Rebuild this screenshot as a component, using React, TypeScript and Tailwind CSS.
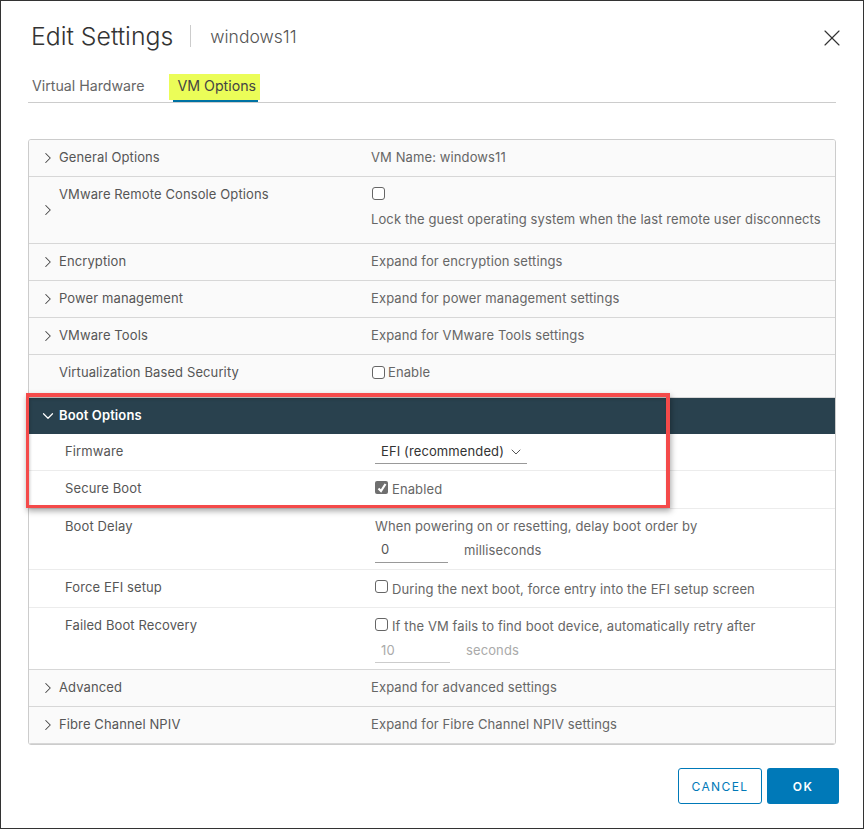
import { ChevronDown, ChevronRight, X } from 'lucide-react'
import type { ReactNode } from 'react'

function Box({ checked, className = '' }: { checked?: boolean; className?: string }) {
  if (checked) {
    return (
      <span className={`flex h-[13px] w-[13px] shrink-0 items-center justify-center rounded-[2px] bg-[#6f6f6f] ${className}`}>
        <svg viewBox="0 0 12 12" className="h-[12px] w-[12px]" fill="none" stroke="#fff" strokeWidth="2.2">
          <path d="M2.5 6.5 5 9l4.5-7" />
        </svg>
      </span>
    )
  }
  return <span className={`block h-[13px] w-[13px] shrink-0 rounded-[3px] border border-[#666] bg-white ${className}`} />
}

function Row({
  label,
  noChevron,
  height,
  children,
}: {
  label: string
  noChevron?: boolean
  height: string
  children: ReactNode
}) {
  return (
    <div className={`flex border-b border-[#d7d7d7] bg-[#fafafa] ${height}`}>
      <div className="flex w-[342px] shrink-0 pl-[10px]">
        <span className="flex w-[20px] shrink-0 items-center">
          {!noChevron && <ChevronRight size={18} strokeWidth={1.4} className="text-[#444]" />}
        </span>
        <span className="pt-[8px] text-[#565656]">{label}</span>
      </div>
      <div className="min-w-0 flex-1 pt-[8px]">{children}</div>
    </div>
  )
}

function SubRow({ label, height, children, last }: { label: string; height: string; children: ReactNode; last?: boolean }) {
  return (
    <div className={`flex border-b ${last ? 'border-[#d7d7d7]' : 'border-[#ececec]'} bg-white ${height}`}>
      <div className="w-[346px] shrink-0 pl-[36px] pt-[8px] text-[#565656]">{label}</div>
      <div className="min-w-0 flex-1">{children}</div>
    </div>
  )
}

export default function App() {
  return (
    <div className="relative flex h-[829px] w-[864px] flex-col border border-[#333] bg-white font-['Inter',sans-serif] text-[13px] tracking-[0.11px]">
      {/* Title */}
      <div className="flex h-[72px] items-start pl-[30px] pr-[17px] pt-[24px]">
        <h1 className="text-[24.8px] font-light leading-[22px] tracking-normal text-[#333]">Edit Settings</h1>
        <span className="ml-[17px] mr-[19px] h-[22px] w-px bg-[#ccc]" />
        <span className="text-[17.5px] font-light leading-[24px] tracking-normal text-[#555]">windows11</span>
        <X size={28} strokeWidth={1} className="ml-auto -mt-[1px] text-[#333]" />
      </div>

      {/* Tabs */}
      <div className="mx-[27px] flex h-[30px] w-[808px] border-b border-[#ccc] text-[14.2px] tracking-normal">
        <span className="ml-[4px] pt-[2px] text-[#666]">Virtual Hardware</span>
        <div className="relative ml-[29px] w-[85px] border-b-[3px] border-[#0072a3] pl-[4px] pt-[2px] text-[#444]">
          <span className="absolute -left-[4px] -right-[2px] top-[1px] h-[26px] bg-[#ebfd58]" />
          <span className="relative">VM Options</span>
        </div>
      </div>

      {/* Settings table */}
      <div className="mx-[27px] mt-[36px] w-[808px] overflow-hidden rounded-[3px] border border-[#ccc]">
        <Row label="General Options" height="h-[37px]">
          <span className="text-[#666]">VM Name: windows11</span>
        </Row>
        <Row label="VMware Remote Console Options" height="h-[67px]">
          <Box className="ml-[1px] mt-[2px]" />
          <div className="mt-[10px] text-[#666]">Lock the guest operating system when the last remote user disconnects</div>
        </Row>
        <Row label="Encryption" height="h-[37px]">
          <span className="text-[#666]">Expand for encryption settings</span>
        </Row>
        <Row label="Power management" height="h-[37px]">
          <span className="text-[#666]">Expand for power management settings</span>
        </Row>
        <Row label="VMware Tools" height="h-[37px]">
          <span className="text-[#666]">Expand for VMware Tools settings</span>
        </Row>
        <Row label="Virtualization Based Security" noChevron height="h-[43px]">
          <div className="flex items-start gap-[3px]">
            <Box className="ml-[1px] mt-[3px]" />
            <span className="text-[#666]">Enable</span>
          </div>
        </Row>

        <div className="flex h-[36px] items-center bg-[#29414e] pl-[10px] font-semibold text-white">
          <ChevronDown size={18} strokeWidth={1.6} className="mr-[2px] text-white" />
          Boot Options
        </div>

        <SubRow label="Firmware" height="h-[37px]">
          <div className="flex h-[30px] w-[152px] items-center justify-between border-b border-[#999] pl-[6px] pr-[3px] pt-[6px] text-[#333]">
            EFI (recommended)
            <ChevronDown size={16} strokeWidth={1.5} className="text-[#555]" />
          </div>
        </SubRow>
        <SubRow label="Secure Boot" height="h-[38px]">
          <div className="flex items-start gap-[4px] pt-[9px]">
            <Box checked className="mt-[1px]" />
            <span className="text-[#666]">Enabled</span>
          </div>
        </SubRow>
        <SubRow label="Boot Delay" height="h-[61px]">
          <div className="pt-[8px] text-[#666]">
            <div>When powering on or resetting, delay boot order by</div>
            <div className="mt-[1px] flex items-center">
              <span className="flex h-[25px] w-[73px] items-center border-b border-[#999] pl-[6px] text-[#555]">0</span>
              <span className="ml-[16px] pt-[1px]">milliseconds</span>
            </div>
          </div>
        </SubRow>
        <SubRow label="Force EFI setup" height="h-[38px]">
          <div className="flex items-start gap-[4px] pt-[10px] text-[#666]">
            <Box />
            <span>During the next boot, force entry into the EFI setup screen</span>
          </div>
        </SubRow>
        <SubRow label="Failed Boot Recovery" height="h-[62px]" last>
          <div className="pt-[9px] text-[#666]">
            <div className="flex items-start gap-[4px]">
              <Box className="mt-[1px]" />
              <span>If the VM fails to find boot device, automatically retry after</span>
            </div>
            <div className="mt-[1px] flex items-center text-[#aaa]">
              <span className="flex h-[25px] w-[75px] items-center border-b border-[#ccc] pl-[6px] pt-[2px]">10</span>
              <span className="ml-[16px] pt-[2px]">seconds</span>
            </div>
          </div>
        </SubRow>

        <Row label="Advanced" height="h-[37px]">
          <span className="text-[#666]">Expand for advanced settings</span>
        </Row>
        <Row label="Fibre Channel NPIV" height="h-[37px]">
          <span className="text-[#666]">Expand for Fibre Channel NPIV settings</span>
        </Row>
      </div>

      {/* Footer */}
      <div className="mr-[24px] mt-[23px] flex justify-end gap-[5px] text-[12px] tracking-[1.4px]">
        <button className="h-[36px] w-[84px] rounded-[3px] border border-[#0079b8] bg-white pt-[1px] text-[#0079b8]">CANCEL</button>
        <button className="h-[36px] w-[72px] rounded-[3px] bg-[#0079b8] pt-[1px] font-semibold text-white">OK</button>
      </div>

      {/* Red annotation box */}
      <div className="absolute left-[25px] top-[392px] h-[115px] w-[644px] border-[3px] border-r-4 border-t-4 border-[#f44a4a] shadow-[1px_3px_6px_rgba(0,0,0,0.35),inset_1px_2px_3px_rgba(0,0,0,0.2)]" />
    </div>
  )
}
